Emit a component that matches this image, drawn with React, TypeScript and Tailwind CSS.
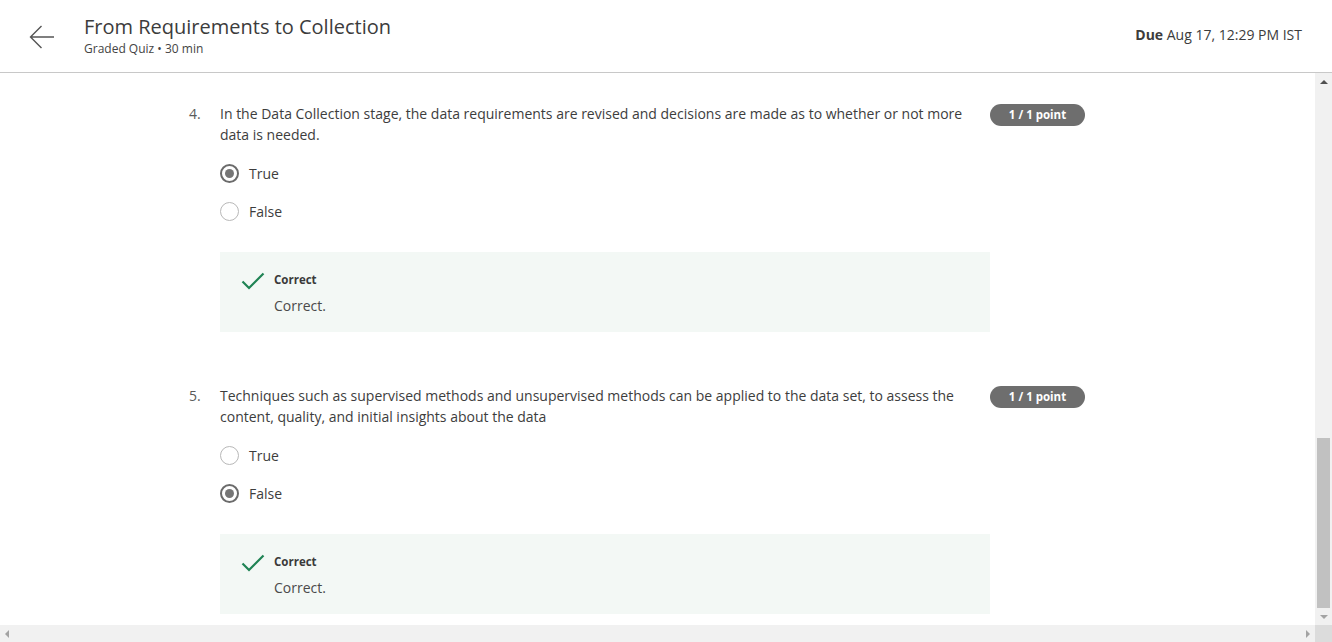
import React from "react";

function Radio({ checked }: { checked: boolean }) {
  return checked ? (
    <span className="flex h-[19px] w-[19px] items-center justify-center rounded-full border-2 border-[#6b6b6b]">
      <span className="h-[9px] w-[9px] rounded-full bg-[#767676]" />
    </span>
  ) : (
    <span className="h-[19px] w-[19px] rounded-full border-[1.5px] border-[#b8b8b8]" />
  );
}

function Question({
  num,
  text,
  answer,
}: {
  num: number;
  text: string;
  answer: "True" | "False";
}) {
  return (
    <div className="flex">
      <div className="w-[31px] text-[14px] leading-[21px] text-[#5a5a5a]">{num}.</div>
      <div className="w-[770px]">
        <p className="w-[750px] text-[14px] leading-[21px] text-[#3d3d3d]">{text}</p>
        <div className="mt-[9.5px] flex flex-col">
          {(["True", "False"] as const).map((o) => (
            <div key={o} className="flex h-[38px] items-center">
              <Radio checked={o === answer} />
              <span className="ml-[10px] text-[14px] text-[#3d3d3d]">{o}</span>
            </div>
          ))}
        </div>
        <div className="mt-[21.5px] flex h-[80px] bg-[#f3f8f5] pl-[21px] pt-[19px]">
          <svg width="24" height="18" viewBox="0 0 24 18" className="mt-[1px]">
            <path d="M1.5 9.5 L8 16 L22.5 1.5" fill="none" stroke="#1f8354" strokeWidth="2.2" />
          </svg>
          <div className="ml-[9px]">
            <div className="text-[11.5px] font-bold leading-[18px] text-[#3a3a3a]">Correct</div>
            <div className="mt-[7px] text-[14px] leading-[20px] text-[#4a4a4a]">Correct.</div>
          </div>
        </div>
      </div>
      <div className="mt-[1px]">
        <span className="flex h-[22px] w-[95px] items-center justify-center rounded-full bg-[#6e6e6e] text-[11.5px] font-bold text-white">
          1 / 1 point
        </span>
      </div>
    </div>
  );
}

export default function App() {
  return (
    <div className="flex h-[642px] w-[1332px] flex-col overflow-hidden bg-white font-['Open_Sans',sans-serif]">
      <header className="flex h-[73px] shrink-0 border-b border-[#c8c8c8]">
        <div className="pl-[29px] pt-[25px]">
          <svg width="26" height="24" viewBox="0 0 26 24">
            <path d="M12.5 1 L1.5 12 L12.5 23 M1.5 12 H25" fill="none" stroke="#555" strokeWidth="1.4" />
          </svg>
        </div>
        <div className="ml-[29px] pt-[13px]">
          <h1 className="text-[20px] leading-[28px] text-[#3c3c3c]">From Requirements to Collection</h1>
          <div className="text-[12px] leading-[16px] text-[#444]">Graded Quiz • 30 min</div>
        </div>
        <div className="ml-auto pr-[30px] pt-[25px] text-[14px] leading-[20px] text-[#3c3c3c]">
          <span className="font-bold">Due</span> Aug 17, 12:29 PM IST
        </div>
      </header>
      <div className="flex min-h-0 flex-1">
        <main className="flex-1 overflow-hidden pl-[189px] pt-[30px]">
          <Question
            num={4}
            answer="True"
            text="In the Data Collection stage, the data requirements are revised and decisions are made as to whether or not more data is needed."
          />
          <div className="h-[53px]" />
          <Question
            num={5}
            answer="False"
            text="Techniques such as supervised methods and unsupervised methods can be applied to the data set, to assess the content, quality, and initial insights about the data"
          />
        </main>
        <div className="flex w-[17px] flex-col bg-[#f1f1f1]">
          <div className="flex h-[17px] items-center justify-center">
            <span className="h-0 w-0 border-x-[4px] border-b-[4px] border-x-transparent border-b-[#505050]" />
          </div>
          <div className="flex flex-1 flex-col px-[2px]">
            <div className="flex-1" />
            <div className="h-[170px] bg-[#c1c1c1]" />
          </div>
          <div className="flex h-[17px] items-center justify-center">
            <span className="h-0 w-0 border-x-[4px] border-t-[4px] border-x-transparent border-t-[#a3a3a3]" />
          </div>
        </div>
      </div>
      <div className="flex h-[17px] shrink-0">
        <div className="flex flex-1 items-center justify-between bg-[#f1f1f1] px-[5px]">
          <span className="h-0 w-0 border-y-[4px] border-r-[4px] border-y-transparent border-r-[#a3a3a3]" />
          <span className="h-0 w-0 border-y-[4px] border-l-[4px] border-y-transparent border-l-[#a3a3a3]" />
        </div>
        <div className="w-[17px] bg-[#dcdcdc]" />
      </div>
    </div>
  );
}
